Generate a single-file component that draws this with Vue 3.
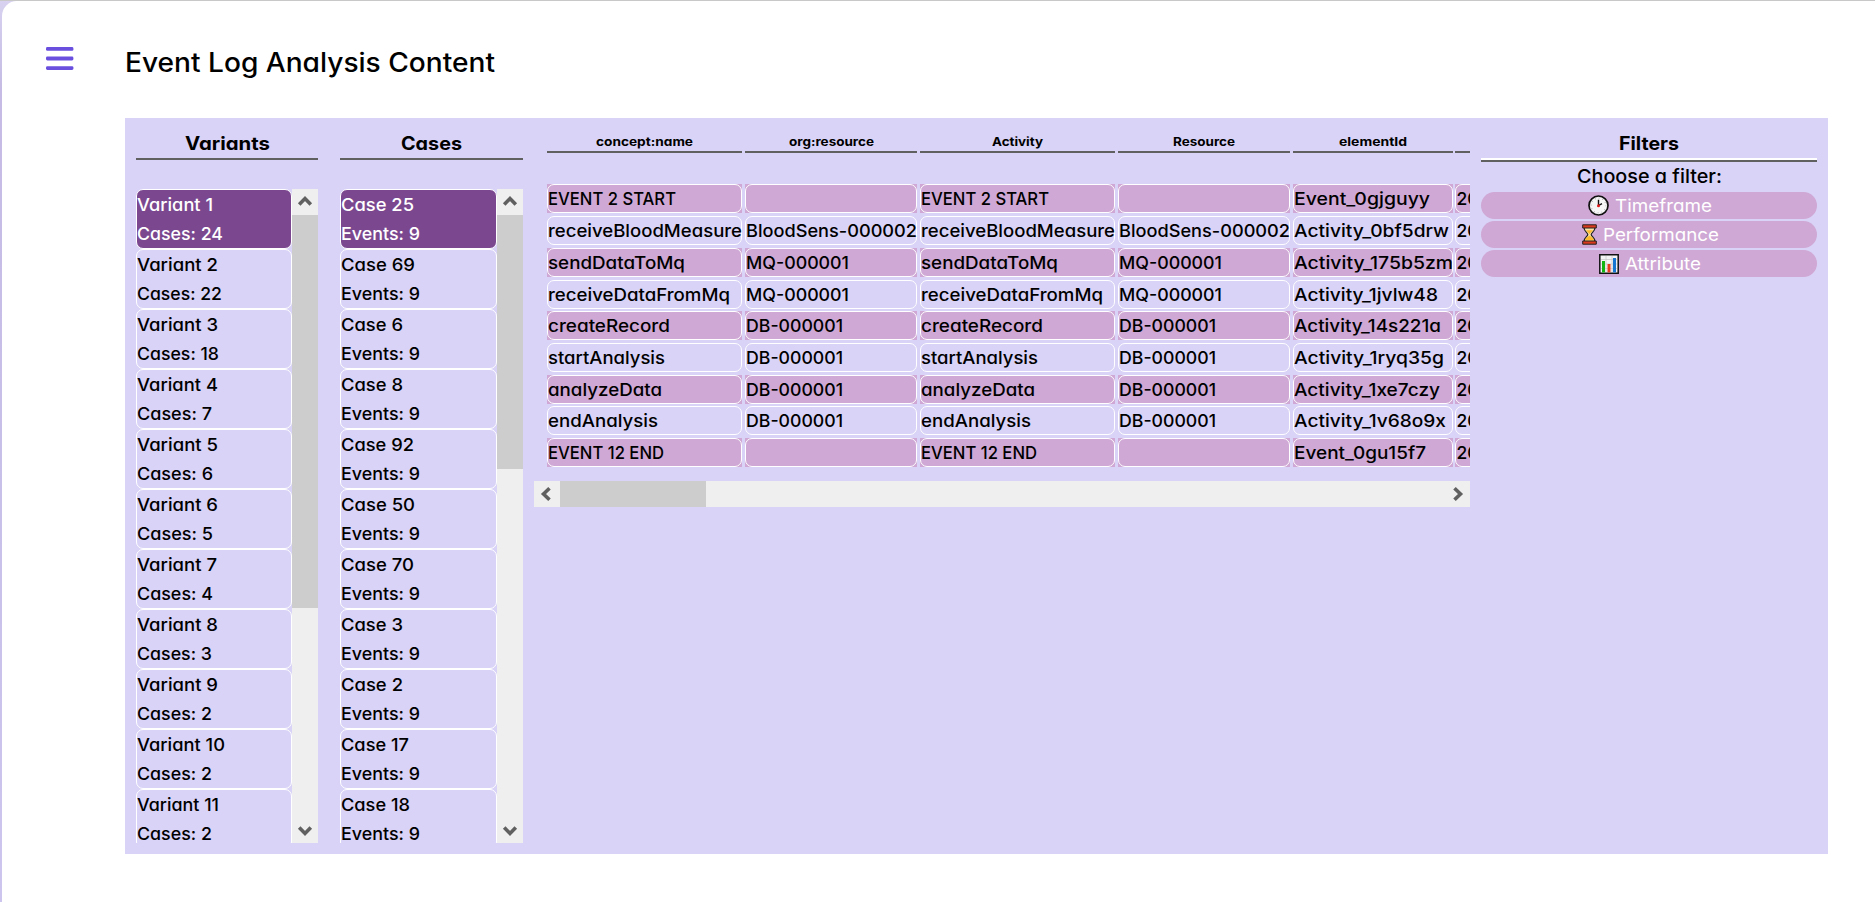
<script setup>
// Stretches a label horizontally so that it fills a given width.
const vFit = {
  mounted(el, { value }) {
    if (!value) return
    const scale = value / el.getBoundingClientRect().width
    el.style.width = `${value}px`
    el.style.transform = `scaleX(${scale})`
  },
}

const variants = [
  [1, 76, 24, 86], [2, 81, 22, 85], [3, 81, 18, 82], [4, 81, 7, 75],
  [5, 81, 6, 76], [6, 81, 5, 76], [7, 80, 4, 76], [8, 81, 3, 75],
  [9, 81, 2, 75], [10, 88, 2, 75], [11, 82, 2, 75],
]
const cases = [
  [25, 73], [69, 74], [6, 62], [8, 62], [92, 73], [50, 74],
  [70, 73], [3, 62], [2, 62], [17, 68], [18, 69],
]
const lists = [
  {
    title: 'Variants', width: 85, thumb: 393,
    items: variants.map(([n, w, c, cw]) => [`Variant ${n}`, w, `Cases: ${c}`, cw]),
  },
  {
    title: 'Cases', width: 61, thumb: 254,
    items: cases.map(([n, w]) => [`Case ${n}`, w, 'Events: 9', 79]),
  },
]

const headers = [
  ['concept:name', 97], ['org:resource', 85], ['Activity', 51],
  ['Resource', 62], ['elementId', 68], ['', 0],
]
const blood = ['BloodSens-000002', 171]
const mq = ['MQ-000001', 103]
const db = ['DB-000001', 97]
const none = ['', 0]
const rows = [
  [['EVENT 2 START', 128], none, ['Event_0gjguyy', 136]],
  [['receiveBloodMeasure', 194], blood, ['Activity_0bf5drw', 155]],
  [['sendDataToMq', 137], mq, ['Activity_175b5zm', 159]],
  [['receiveDataFromMq', 182], mq, ['Activity_1jvlw48', 144]],
  [['createRecord', 122], db, ['Activity_14s221a', 147]],
  [['startAnalysis', 117], db, ['Activity_1ryq35g', 150]],
  [['analyzeData', 114], db, ['Activity_1xe7czy', 146]],
  [['endAnalysis', 110], db, ['Activity_1v68o9x', 152]],
  [['EVENT 12 END', 116], none, ['Event_0gu15f7', 132]],
].map(([name, res, id]) => [name, res, name, res, id, ['2024', 0]])
</script>

<template>
  <div class="page">
    <main class="sheet">
      <svg class="menu" width="28" height="24" viewBox="0 0 28 24">
        <g fill="#6a4fdf">
          <rect width="27.4" height="3.8" rx="1.4" />
          <rect y="9.6" width="27.4" height="3.8" rx="1.4" />
          <rect y="19.2" width="27.4" height="3.8" rx="1.4" />
        </g>
      </svg>
      <div class="content">
        <h1><span v-fit="370">Event Log Analysis Content</span></h1>
        <div class="panel">
          <section v-for="list in lists" :key="list.title" class="list">
            <h2><span v-fit="list.width">{{ list.title }}</span></h2>
            <div class="scroller">
              <ul>
                <li v-for="(item, i) in list.items" :key="item[0]" :class="{ active: i === 0 }">
                  <div><span v-fit="item[1]">{{ item[0] }}</span></div>
                  <div><span v-fit="item[3]">{{ item[2] }}</span></div>
                </li>
              </ul>
              <div class="bar vertical">
                <svg width="26" height="26"><path d="M7.2 15.5 13 9.5 18.8 15.5" /></svg>
                <div class="thumb" :style="{ height: list.thumb + 'px' }"></div>
                <svg class="end" width="26" height="26"><path d="M7.2 10.5 13 16.5 18.8 10.5" /></svg>
              </div>
            </div>
          </section>

          <section class="events">
            <div class="grid head">
              <div v-for="(h, i) in headers" :key="i"><span v-fit="h[1]">{{ h[0] }}</span></div>
            </div>
            <div class="rows">
              <div v-for="(row, r) in rows" :key="r" class="grid row">
                <div v-for="(cell, c) in row" :key="c" class="cell">
                  <div><span v-fit="cell[1]">{{ cell[0] }}</span></div>
                </div>
              </div>
            </div>
            <div class="bar horizontal">
              <svg width="26" height="26"><path d="M15.5 7.2 9.5 13 15.5 18.8" /></svg>
              <div class="thumb"></div>
              <svg class="end" width="26" height="26"><path d="M10.5 7.2 16.5 13 10.5 18.8" /></svg>
            </div>
          </section>

          <section class="filters">
            <h2><span v-fit="60">Filters</span></h2>
            <p><span v-fit="145">Choose a filter:</span></p>
            <button>
              <svg width="21" height="21" viewBox="0 0 21 21">
                <circle cx="10.5" cy="10.5" r="9.5" fill="#f6f6f6" stroke="#111" stroke-width="1.7" />
                <circle cx="10.5" cy="10.5" r="7.4" fill="none" stroke="#aaa" stroke-width="1.2" stroke-dasharray=".8 3.07" />
                <path d="M10.5 4.7V10.5L14 8.7" fill="none" stroke="#111" stroke-width="1.4" />
                <circle cx="10.5" cy="10.7" r="1.5" fill="#e31b1b" />
              </svg>
              <span v-fit="97">Timeframe</span>
            </button>
            <button>
              <svg width="15" height="21" viewBox="0 0 15 21">
                <path d="M2 3.5C2 7.5 5.8 8.6 5.8 10.5S2 13.5 2 17.5H13C13 13.5 9.2 12.4 9.2 10.5S13 7.5 13 3.5Z" fill="#fbe6a6" stroke="#222" stroke-width="1.2" />
                <path d="M4 6.2H11L7.5 10ZM3 16.6C3.5 13.5 6 13 7.5 11.5 9 13 11.5 13.5 12 16.6Z" fill="#fdb92e" />
                <path d="M.7.8H14.3V4H.7ZM.7 17H14.3V20.2H.7Z" fill="#dc3a1c" stroke="#222" stroke-width="1" />
              </svg>
              <span v-fit="116">Performance</span>
            </button>
            <button>
              <svg width="20" height="20" viewBox="0 0 20 20">
                <path d="M.8.8H19.2V19.2H.8Z" fill="#f4f4f4" stroke="#111" stroke-width="1.5" />
                <path d="M2 5.5H18M2 10H18M2 14.5H18M7 2V18M13 2V18" fill="none" stroke="#ccc" stroke-width=".8" />
                <path d="M3 7H6V18.4H3Z" fill="#12b412" />
                <path d="M8.5 10H11.5V18.4H8.5Z" fill="#e8391d" />
                <path d="M14 4H17V18.4H14Z" fill="#1675d1" />
              </svg>
              <span v-fit="76">Attribute</span>
            </button>
          </section>
        </div>
      </div>
    </main>
  </div>
</template>

<style>
body {
  background: #fff;
}
</style>

<style scoped>
.page {
  box-sizing: border-box;
  height: 902px;
  padding: 1px 0 0 2px;
  overflow: hidden;
  background: linear-gradient(#c8c8c8 1px, transparent 1px), linear-gradient(#d8d2f0, #c5bbe4 90px, #cdc5ee);
  font-family: Inter, "Liberation Sans", sans-serif;
  font-feature-settings: "cv11";
  font-size: 17.5px;
  font-weight: 500;
  color: #000;
}
.sheet {
  box-sizing: border-box;
  display: flex;
  height: 901px;
  padding: 41px 0 0 44px;
  background: #fff;
  border-top-left-radius: 15px;
}
.menu {
  flex: none;
  margin: 5px 51px 0 0;
}
span {
  display: inline-block;
  text-align: left;
  transform-origin: left center;
  white-space: pre;
}
h1,
h2,
p,
ul {
  margin: 0;
  padding: 0;
}
h1 {
  font-size: 26.5px;
  font-weight: 500;
  line-height: 40px;
}
.panel {
  box-sizing: border-box;
  display: grid;
  grid-template-columns: 193px 183px 936px 336px;
  column-gap: 11px;
  width: 1703px;
  height: 736px;
  margin-top: 36px;
  padding: 10px 11px 11px;
  background: #d9d3f7;
}
.list:first-child {
  width: 182px;
}
h2 {
  height: 30px;
  border-bottom: 2px solid #606060;
  font-size: 18.3px;
  font-weight: 700;
  line-height: 30px;
  text-align: center;
}
.scroller {
  display: flex;
  height: 654px;
  margin-top: 29px;
  overflow: hidden;
}
ul {
  flex: 1;
  list-style: none;
}
li {
  height: 58px;
  border: 1px solid #fff;
  border-radius: 7px;
  line-height: 29px;
}
li.active {
  background: #7b4890;
  color: #fff;
}
.bar {
  display: flex;
  flex: none;
  background: #efefef;
}
.bar svg {
  flex: none;
  fill: none;
  stroke: #606060;
  stroke-width: 3.6;
}
.vertical {
  flex-direction: column;
  width: 26px;
}
.thumb {
  background: #cdcdcd;
}
.vertical .end {
  margin-top: auto;
}
.horizontal {
  height: 26px;
  margin-top: 13.8px;
}
.horizontal .thumb {
  width: 146px;
}
.horizontal .end {
  margin-left: auto;
}
.events {
  padding-top: 3px;
  overflow: hidden;
}
.grid {
  display: grid;
  grid-template-columns: 195.2px 172.8px 195.2px 172.8px 160px 200px;
  column-gap: 2.5px;
  width: 1111px;
  margin-left: 13px;
}
.head {
  height: 22px;
  font-size: 12.3px;
  font-weight: 700;
  line-height: 21px;
  text-align: center;
}
.head > div {
  box-sizing: border-box;
  height: 22px;
  border-bottom: 2px solid #606060;
}
.rows {
  display: grid;
  row-gap: 2.72px;
  margin-top: 31.4px;
}
.cell {
  height: 29px;
}
.cell > div {
  box-sizing: border-box;
  height: 29px;
  border: 1px solid #fff;
  border-radius: 7px;
  line-height: 27px;
}
.row:nth-child(odd) .cell {
  background: #cfa8d5;
}
.filters h2 {
  border-bottom-color: #fff;
}
.filters p {
  height: 30px;
  border-top: 2px solid #606060;
  font-size: 19px;
  line-height: 29px;
  text-align: center;
}
.filters button {
  display: flex;
  align-items: center;
  justify-content: center;
  gap: 6px;
  width: 336px;
  height: 27px;
  margin: 0 0 2px;
  padding: 0 0 0 2px;
  border: 0;
  border-radius: 14px;
  background: #cfa8d5;
  color: #fff;
  font: inherit;
  font-weight: 400;
  font-feature-settings: inherit;
}
</style>
